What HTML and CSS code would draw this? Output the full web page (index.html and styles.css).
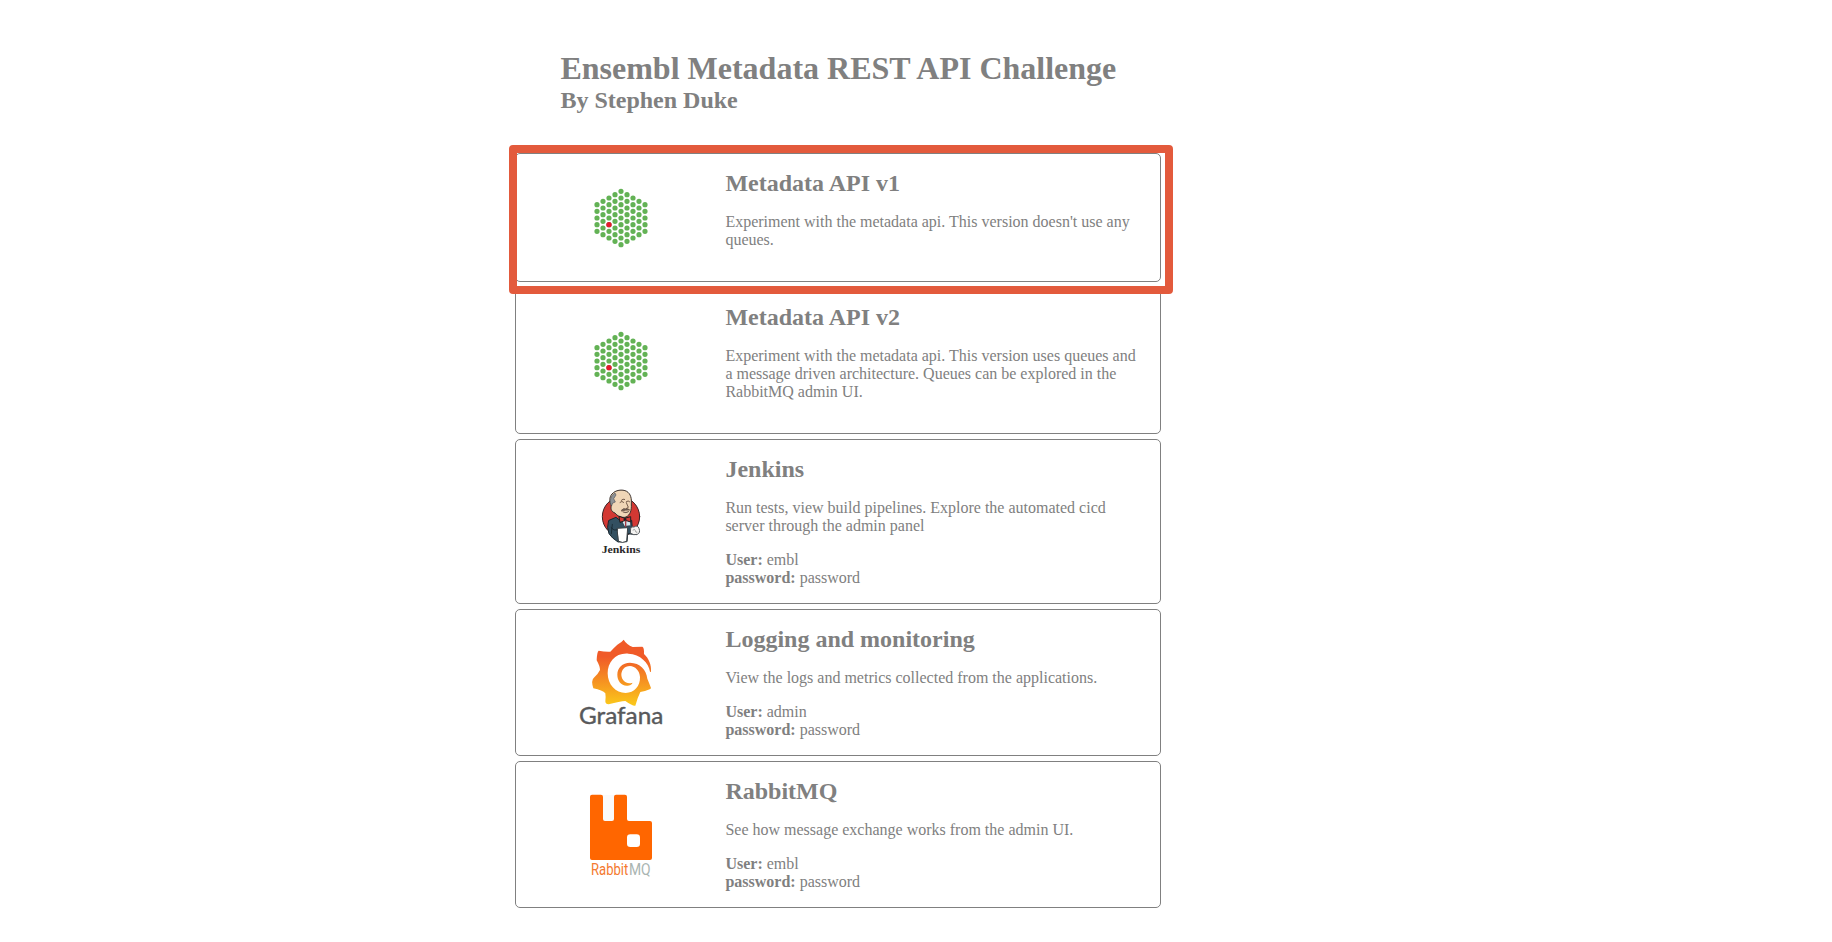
FILE: index.html
```html
<!DOCTYPE html>
<html lang="en">
<head>
<meta charset="utf-8">
<title>Ensembl Metadata REST API Challenge</title>
<link rel="stylesheet" href="styles.css">
</head>
<body>
<svg class="defs" width="0" height="0" aria-hidden="true">
  <symbol id="ensembl" viewBox="0 0 100 100">
    <path class="dots" d="M26 37.67v26.7M32 34.33v33.36M38 31v40.03M44 27.67v46.7M50 24.33v53.36M56 27.67v46.7M62 31v40.03M68 34.33v33.36M74 37.67v26.7"/>
    <circle cx="38" cy="57.67" r="2.7" fill="#e5182d"/>
  </symbol>
</svg>
<main class="page">
  <header class="header">
    <h1 class="title">Ensembl Metadata REST API Challenge</h1>
    <h2 class="author">By Stephen Duke</h2>
  </header>
  <div class="cards">
    <section class="card">
      <div class="logo"><svg class="icon"><use href="#ensembl"/></svg></div>
      <div class="info">
        <h2 class="name">Metadata API v1</h2>
        <p class="text">Experiment with the metadata api. This version doesn't use any queues.</p>
        <p class="text"></p>
      </div>
      <div class="highlight"></div>
    </section>
    <section class="card">
      <div class="logo"><svg class="icon"><use href="#ensembl"/></svg></div>
      <div class="info">
        <h2 class="name">Metadata API v2</h2>
        <p class="text">Experiment with the metadata api. This version uses queues and a message driven architecture. Queues can be explored in the RabbitMQ admin UI.</p>
        <p class="text"></p>
      </div>
    </section>
    <section class="card">
      <div class="logo">
        <svg class="icon" viewBox="0 0 100 100">
          <g transform="translate(19 9) scale(.33333)" stroke-linejoin="round" stroke-linecap="round">
            <ellipse cx="93" cy="110" rx="56" ry="58" fill="#d33833" stroke="#3a2224" stroke-width="3"/>
            <path d="M57 121 78 112 92 123 125 121 127 147 143 151 140 164 113 161 111 185 84 186 68 174 57 161 53 143Z" fill="#335061" stroke="#17262f" stroke-width="3"/>
            <path d="M64 77C58 66 57 52 66 42 76 30 97 27 110 34 123 42 125 56 124 72 125 91 121 105 108 111 97 115 81 108 75 99 66 96 60 88 64 77Z" fill="#f0d6b7" stroke="#3a302c" stroke-width="3"/>
            <path d="M64 77C58 64 61 47 75 39L78 45 71 56 76 66 69 69Z" fill="#8e9296" stroke="#55585c" stroke-width="2"/>
            <path d="M90 67q6-6 11 0M109 65q6-5 10 0M109 68l6 14-7 4M94 61q5-6 10-3" fill="none" stroke="#5a4234" stroke-width="2.5"/>
            <path d="M94 91q8-8 12-4 8-3 13 3-11-1-24 3M99 96q9 5 17-1" fill="#6d6662" stroke="#6b5141" stroke-width="2.5"/>
            <path d="M91 114 103 139 122 137 121 116Z" fill="#d4e3eb" stroke="#21343f" stroke-width="2"/>
            <path d="M88 109 104 115 122 110 122 126 106 121 91 127Z" fill="#d33833" stroke="#231f20" stroke-width="3"/>
            <circle cx="105" cy="118" r="4" fill="#231f20"/>
            <path d="M107 124v15" stroke="#a43a42" stroke-width="4"/>
            <path d="M82 145 113 143 110 184Q97 191 86 184Z" fill="#fff" stroke="#3a4044" stroke-width="3"/>
            <path d="M63 143q8 11 20 7M67 133l-3 28" fill="none" stroke="#17262f" stroke-width="2.5"/>
            <path d="M122 145Q123 138 132 141 143 134 147 145 152 159 142 163 131 167 122 160Z" fill="#f4f3f1" stroke="#55585c" stroke-width="3"/>
            <path d="M129 150q6-5 7 2t5 5" fill="none" stroke="#777" stroke-width="2"/>
            <text x="35" y="219" textLength="116" lengthAdjust="spacingAndGlyphs" class="jenkins-word">Jenkins</text>
          </g>
        </svg>
      </div>
      <div class="info">
        <h2 class="name">Jenkins</h2>
        <p class="text">Run tests, view build pipelines. Explore the automated cicd server through the admin panel</p>
        <p class="text"><b>User:</b> embl<br><b>password:</b> password</p>
      </div>
    </section>
    <section class="card">
      <div class="logo">
        <svg class="icon" viewBox="0 0 100 100">
          <defs>
            <linearGradient id="sun" gradientUnits="userSpaceOnUse" x1="0" y1="228" x2="0" y2="80">
              <stop offset="0" stop-color="#fbca1a"/>
              <stop offset="1" stop-color="#f05a28"/>
            </linearGradient>
          </defs>
          <g transform="translate(-1 -2) scale(.33333)">
            <path fill="url(#sun)" d="M161 29Q170 44 188 51 203 50 217 50 223 53 222 72C236 85 245 104 243 126L240 125C236 98 211 73 175 71 136 68 113 97 113 130 113 164 137 189 167 189 193 188 211 168 210 141 209 121 195 109 180 108 163 108 154 121 154 135 155 151 169 164 187 158 188 162 180 167 170 167 153 166 142 152 142 134 142 113 157 98 180 98 210 99 229 119 232 146Q238 160 243 174 243 179 211 186 203 202 196 227 190 230 166 213 150 214 116 223 106 223 106 214 108 203 106 190 98 181 70 175 62 151 73 142 84 132 90 120 90 109 80 91 81 66 86 62 105 66 121 65 133 52 142 44 155 37 161 29Z"/>
          </g>
          <text x="8" y="92.3" textLength="84.3" lengthAdjust="spacingAndGlyphs" class="grafana-word">Grafana</text>
        </svg>
      </div>
      <div class="info">
        <h2 class="name">Logging and monitoring</h2>
        <p class="text">View the logs and metrics collected from the applications.</p>
        <p class="text"><b>User:</b> admin<br><b>password:</b> password</p>
      </div>
    </section>
    <section class="card">
      <div class="logo">
        <svg class="icon" viewBox="0 0 100 100">
          <g transform="translate(9 1) scale(.33333)">
            <path d="M66 30H106V112H66Z" fill="#fafafa"/>
            <path fill="#f60" fill-rule="evenodd" d="M36 29H63Q69 29 69 35V102Q69 108 75 108H96Q102 108 102 102V35Q102 29 108 29H135Q141 29 141 35V102Q141 108 147 108H210Q216 108 216 114V219Q216 225 210 225H36Q30 225 30 219V35Q30 29 36 29ZM151 148Q141 148 141 158V176Q141 186 151 186H170Q180 186 180 176V158Q180 148 170 148Z"/>
            <text x="33" y="270" textLength="112" lengthAdjust="spacingAndGlyphs" class="rabbit-word">Rabbit</text>
            <text x="147" y="270" textLength="65" lengthAdjust="spacingAndGlyphs" class="rabbit-word mq">MQ</text>
          </g>
        </svg>
      </div>
      <div class="info">
        <h2 class="name">RabbitMQ</h2>
        <p class="text">See how message exchange works from the admin UI.</p>
        <p class="text"><b>User:</b> embl<br><b>password:</b> password</p>
      </div>
    </section>
  </div>
</main>
</body>
</html>
```
FILE: styles.css
```css
* { box-sizing: border-box; }

body {
  margin: 0;
  background: #fff;
  color: #808080;
  font: 16px/18px "Liberation Serif", serif;
}

.defs { display: block; }

.page {
  width: 646px;
  margin-left: 515px;
  padding-top: 50px;
}

.header {
  height: 103px;
  padding-left: 45.4px;
}

.title, .author, .name, .text { margin: 0; }
.title { font-size: 32px; line-height: 36px; }
.author { padding-top: 1px; font-size: 24px; line-height: 27px; }

.cards {
  display: flex;
  flex-direction: column;
  gap: 5px;
}

.card {
  position: relative;
  display: flex;
  align-items: center;
  border: 1px solid #808080;
  border-radius: 5px;
}

.logo {
  width: 209.4px;
  padding: 0 0 1px 55px;
}

.icon {
  display: block;
  width: 100px;
  height: 100px;
}

.info {
  display: flex;
  flex-direction: column;
  gap: 16px;
  width: 415px;
  padding: 16px 0;
}

.name { font-size: 24px; line-height: 27px; }

/* Frame drawn around the selected card, overlapping its neighbour */
.highlight {
  position: absolute;
  z-index: 1;
  inset: -9px -13px -13px -7px;
  border: 8px solid #e35a3c;
  border-radius: 4px;
}

.dots {
  fill: none;
  stroke: #63b255;
  stroke-width: 5.2;
  stroke-linecap: round;
  stroke-dasharray: 0 6.667;
}

.jenkins-word {
  font: bold 32px "Liberation Serif", serif;
  fill: #2b2829;
}

.grafana-word {
  font: 22.5px Lato, sans-serif;
  fill: #58595b;
  stroke: #58595b;
  stroke-width: .4;
}

.rabbit-word {
  font: 51px Roboto, sans-serif;
  fill: #f47a30;
}

.rabbit-word.mq { fill: #a9b5b2; }
```
